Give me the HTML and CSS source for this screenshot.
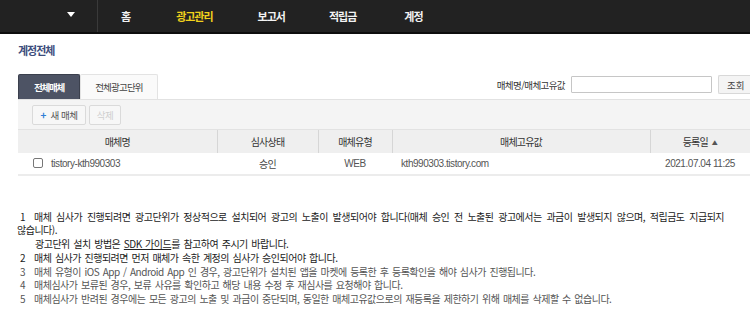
FILE: index.html
```html
<!DOCTYPE html>
<html lang="ko">
<head>
<meta charset="utf-8">
<link rel="stylesheet" href="styles.css">
</head>
<body>
<header class="gnb">
  <div class="gnb-left"><span class="caret"></span></div>
  <nav class="gnb-menu">
    <a class="m m1">홈</a>
    <a class="m m2 active">광고관리</a>
    <a class="m m3">보고서</a>
    <a class="m m4">적립금</a>
    <a class="m m5">계정</a>
  </nav>
</header>
<main class="content">
  <h1 class="title">계정전체</h1>
  <div class="tabbar">
    <div class="tabs">
      <span class="tab on">전체매체</span>
      <span class="tab">전체광고단위</span>
    </div>
    <div class="search">
      <label class="search-label">매체명/매체고유값</label>
      <input class="search-input" type="text">
      <button class="search-btn">조회</button>
    </div>
  </div>
  <div class="toolbar">
    <button class="tbtn add"><span class="plus">+</span>새 매체</button>
    <button class="tbtn disabled">삭제</button>
  </div>
  <table class="grid">
    <colgroup>
      <col class="c1"><col class="c2"><col class="c3"><col class="c4"><col class="c5">
    </colgroup>
    <thead>
      <tr><th>매체명</th><th>심사상태</th><th>매체유형</th><th>매체고유값</th><th>등록일 <span class="sort">▲</span></th></tr>
    </thead>
    <tbody>
      <tr>
        <td class="name lat"><span class="chk"></span>tistory-kth990303</td>
        <td class="ctr">승인</td>
        <td class="ctr lat">WEB</td>
        <td class="key lat">kth990303.tistory.com</td>
        <td class="ctr lat">2021.07.04 11:25</td>
      </tr>
    </tbody>
  </table>
  <ol class="notes">
    <li class="dark first"><span class="num">1</span>매체 심사가 진행되려면 광고단위가 정상적으로 설치되어 광고의 노출이 발생되어야 합니다(매체 승인 전 노출된 광고에서는 과금이 발생되지 않으며, 적립금도 지급되지 않습니다).</li>
    <li class="dark sub">광고단위 설치 방법은 <u>SDK 가이드</u>를 참고하여 주시기 바랍니다.</li>
    <li class="dark"><span class="num">2</span>매체 심사가 진행되려면 먼저 매체가 속한 계정의 심사가 승인되어야 합니다.</li>
    <li><span class="num">3</span>매체 유형이 iOS App / Android App 인 경우, 광고단위가 설치된 앱을 마켓에 등록한 후 등록확인을 해야 심사가 진행됩니다.</li>
    <li><span class="num">4</span>매체심사가 보류된 경우, 보류 사유를 확인하고 해당 내용 수정 후 재심사를 요청해야 합니다.</li>
    <li><span class="num">5</span>매체심사가 반려된 경우에는 모든 광고의 노출 및 과금이 중단되며, 동일한 매체고유값으로의 재등록을 제한하기 위해 매체를 삭제할 수 없습니다.</li>
  </ol>
</main>
</body>
</html>
```
FILE: styles.css
```css
* { box-sizing: border-box; }
html, body { margin: 0; padding: 0; background: #fff; }
body { font-family: "Noto Sans CJK KR", "Liberation Sans", sans-serif; font-size: 10px; color: #333; width: 750px; overflow: hidden; }

.gnb { display: flex; height: 34px; background: #222; border-bottom: 2px solid #0e0e0e; }
.gnb-left { width: 98px; border-right: 1px solid #3a3a3a; position: relative; }
.caret { position: absolute; left: 67px; top: 12px; width: 0; height: 0; border-left: 4px solid transparent; border-right: 4px solid transparent; border-top: 5px solid #fff; }
.gnb-menu { display: flex; align-items: center; height: 31px; }
.m { color: #f2f2f2; font-size: 11px; font-weight: bold; letter-spacing: -1px; white-space: nowrap; }
.m.active { color: #f2d21c; }
.m1 { margin-left: 23px; }
.m2 { margin-left: 46px; }
.m3 { margin-left: 45px; }
.m4 { margin-left: 44px; }
.m5 { margin-left: 48px; }

.content { padding: 0 0 0 18px; }
.title { margin: 0; padding-top: 8px; height: 40px; font-size: 11px; font-weight: bold; letter-spacing: -1px; color: #3d4d7c; line-height: 16px; }

.tabbar { display: flex; justify-content: space-between; height: 25px; }
.tabs { display: flex; height: 25px; }
.tab { width: 78px; height: 25px; display: flex; align-items: center; justify-content: center; border: 1px solid #e3e3e3; border-bottom: none; background: #fafafa; font-size: 9.5px; letter-spacing: -0.8px; color: #444; border-radius: 2px 2px 0 0; }
.tab.on { width: 62px; background: #4d5364; border-color: #3b404d; color: #fff; font-weight: bold; letter-spacing: -1.2px; }
.search { display: flex; align-items: flex-start; padding-top: 1px; }
.search-label { font-size: 9.5px; letter-spacing: -0.6px; color: #333; margin-right: 6px; line-height: 18px; margin-top: 1px; }
.search-input { width: 141px; height: 17px; border: 1px solid #c6c6c6; padding: 0; margin: 1px 6px 0 0; border-radius: 1px; }
.search-btn { width: 32px; height: 19px; border: 1px solid #d8d8d8; border-right: none; background: #f4f4f4; font-family: inherit; font-size: 9.5px; color: #444; padding: 0 0 0 8px; text-align: left; border-radius: 2px 0 0 2px; }

.toolbar { height: 30px; background: #f4f4f4; border-top: 1px solid #e2e2e2; display: flex; align-items: center; padding-left: 14px; gap: 3px; }
.tbtn { height: 20px; border: 1px solid #dadada; background: #f7f7f7; font-family: inherit; font-size: 9.5px; letter-spacing: -0.5px; color: #555; padding: 0; border-radius: 2px; display: flex; align-items: center; justify-content: center; white-space: nowrap; }
.tbtn.add { width: 54px; gap: 4px; }
.tbtn .plus { color: #2f7fd6; font-weight: bold; font-size: 10px; letter-spacing: 0; }
.tbtn.disabled { color: #cfcfcf; width: 32px; }

.grid { width: 732px; border-collapse: collapse; table-layout: fixed; }
.c1 { width: 199px; } .c2 { width: 101px; } .c3 { width: 74px; } .c4 { width: 258px; } .c5 { width: 100px; }
.grid th { height: 23px; background: #efefef; border-left: 1px solid #d6d6d6; border-top: 1px solid #e2e2e2; font-weight: normal; font-size: 10px; letter-spacing: -0.8px; color: #333; padding: 0; }
.grid th:first-child { border-left: none; }
.sort { font-size: 6px; color: #555; vertical-align: 1px; letter-spacing: 0; margin-left: 2px; }
.grid td { height: 22px; border-bottom: 2px solid #ececec; font-size: 10px; letter-spacing: -0.6px; color: #444; padding: 0; }
.grid td.lat { font-family: "Liberation Sans", sans-serif; letter-spacing: -0.45px; color: #555; }
.grid td.ctr { text-align: center; }
.grid td.name { padding-left: 15px; }
.grid td.key { padding-left: 9px; }
.chk { display: inline-block; width: 10px; height: 10px; border: 1px solid #777; border-radius: 2px; vertical-align: -1px; margin-right: 8px; }

.notes { list-style: none; margin: 34px 4px 0 -1px; padding: 0; font-size: 10px; letter-spacing: -0.5px; word-spacing: 1.2px; word-break: keep-all; color: #555; line-height: 13.8px; }
.notes li.dark { color: #222; }
.notes li.first { word-spacing: 2.4px; }
.notes li.sub { padding-left: 18px; }
.num { display: inline-block; width: 17px; padding-left: 3px; }
```
